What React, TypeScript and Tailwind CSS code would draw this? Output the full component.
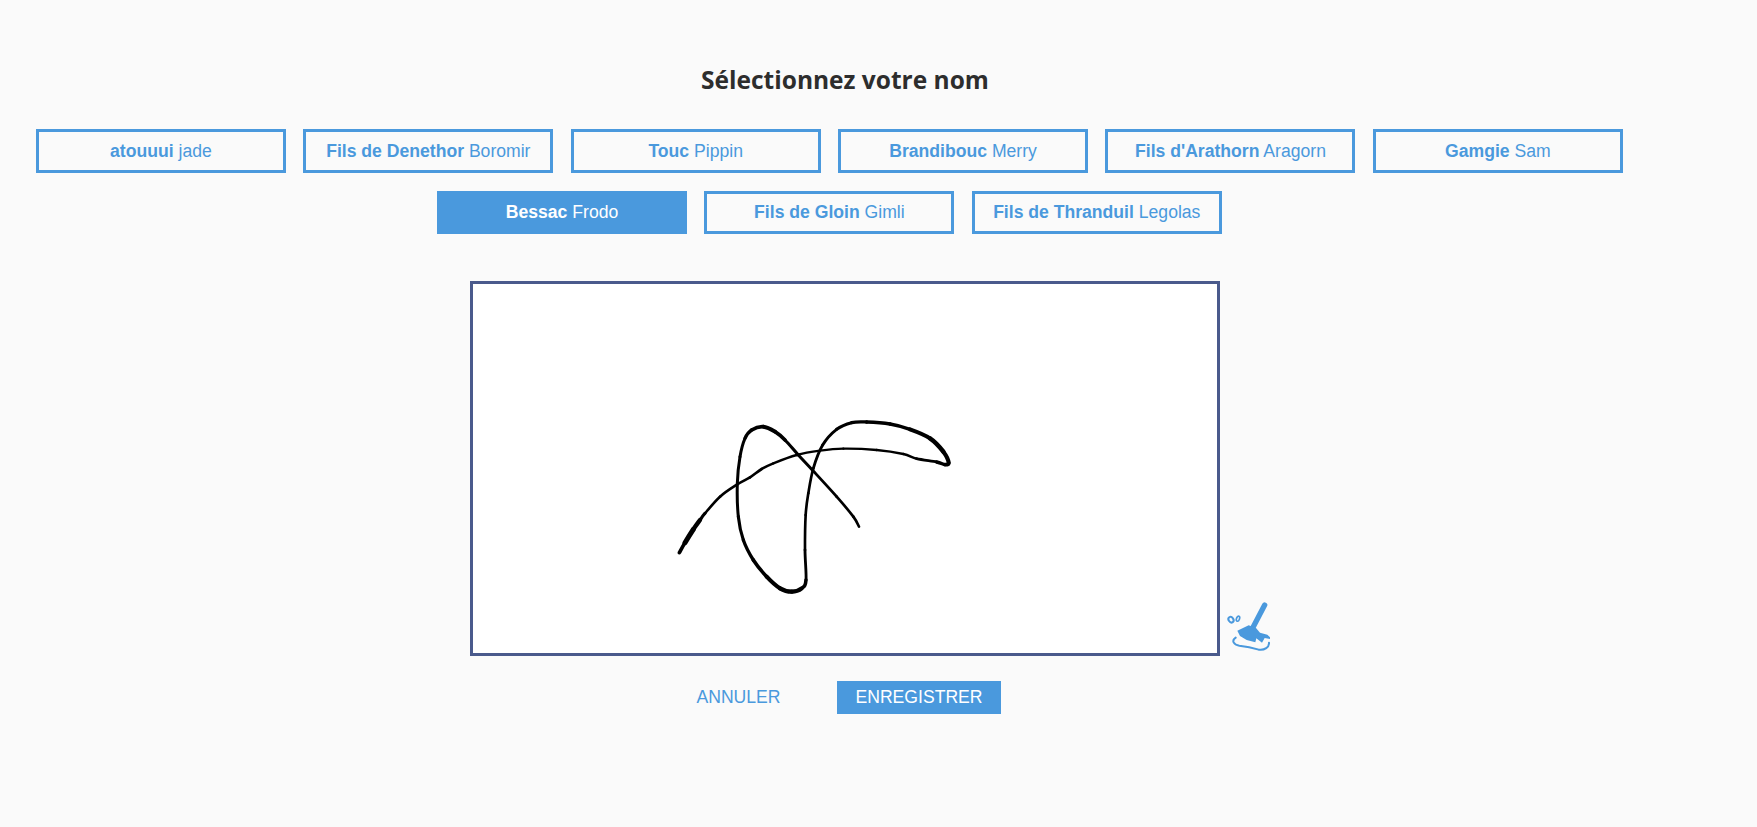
import React from "react";

const names = [
  ["atouuui", "jade"],
  ["Fils de Denethor", "Boromir"],
  ["Touc", "Pippin"],
  ["Brandibouc", "Merry"],
  ["Fils d'Arathorn", "Aragorn"],
  ["Gamgie", "Sam"],
  ["Bessac", "Frodo"],
  ["Fils de Gloin", "Gimli"],
  ["Fils de Thranduil", "Legolas"],
];

// x, y, pen width (3 units = 1px)
type Pt = [number, number, number];

const pen: Pt[] = [
  [88, 458, 7], [105, 428, 15], [130, 388, 15], [150, 360, 11], [165, 340, 8], [210, 290, 8],
  [262, 253, 8], [300, 232, 8], [335, 207, 8], [370, 190, 7], [440, 165, 7], [510, 152, 7],
  [580, 146, 7], [680, 150, 7], [760, 162, 7], [800, 176, 8], [860, 186, 9], [885, 194, 11],
  [896, 188, 11], [880, 155, 14], [840, 115, 13], [780, 88, 11], [720, 72, 10], [650, 66, 10],
  [605, 68, 10], [560, 88, 9], [518, 135, 9], [490, 205, 8], [475, 280, 8], [467, 345, 8],
  [465, 450, 8], [468, 540, 9], [455, 565, 12], [425, 575, 13], [390, 565, 13], [350, 530, 12],
  [310, 480, 10], [280, 420, 10], [265, 350, 9], [262, 250, 9], [270, 170, 9], [285, 115, 9],
  [305, 90, 11], [340, 80, 12], [375, 95, 12], [405, 120, 10], [445, 165, 9], [487, 210, 9],
  [560, 290, 8], [610, 350, 8], [627, 380, 8],
];

// one bezier span per pair of points so the width can change along the stroke
function spans(pts: Pt[]) {
  const out: { d: string; w: number }[] = [];
  for (let i = 0; i < pts.length - 1; i++) {
    const p0 = pts[Math.max(i - 1, 0)];
    const p1 = pts[i];
    const p2 = pts[i + 1];
    const p3 = pts[Math.min(i + 2, pts.length - 1)];
    const c1x = p1[0] + (p2[0] - p0[0]) / 6;
    const c1y = p1[1] + (p2[1] - p0[1]) / 6;
    const c2x = p2[0] - (p3[0] - p1[0]) / 6;
    const c2y = p2[1] - (p3[1] - p1[1]) / 6;
    out.push({
      d: `M${p1[0]} ${p1[1]} C${c1x} ${c1y} ${c2x} ${c2y} ${p2[0]} ${p2[1]}`,
      w: (p1[2] + p2[2]) / 2,
    });
  }
  return out;
}

function Signature() {
  return (
    <svg className="block w-full h-full" viewBox="-531 -348 2232 1107">
      <g fill="none" stroke="#000000" strokeLinecap="round">
        {spans(pen).map((s, i) => (
          <path key={i} d={s.d} strokeWidth={s.w} />
        ))}
      </g>
    </svg>
  );
}

function BroomIcon() {
  return (
    <svg className="block w-[48px] h-[56px]" viewBox="0 0 144 168">
      <path d="M128 27 L94 92" stroke="#4a99dd" strokeWidth="16" strokeLinecap="round" fill="none" />
      <path
        d="M46 104 L80 88 L102 96 L114 110 L136 116 L150 130 L128 126 L120 140 L103 127 L100 139 L74 132 L54 120 Z"
        fill="#4a99dd"
      />
      <path
        d="M41 125 C28 134 34 146 52 149 C75 151 95 156 110 161 C128 164 142 153 141 140"
        fill="none"
        stroke="#4a99dd"
        strokeWidth="6"
        strokeLinecap="round"
      />
      <ellipse cx="27" cy="71" rx="7" ry="9" fill="none" stroke="#4a99dd" strokeWidth="6" transform="rotate(-35 27 71)" />
      <ellipse cx="48" cy="68" rx="4.5" ry="8" fill="none" stroke="#4a99dd" strokeWidth="5" transform="rotate(20 48 68)" />
    </svg>
  );
}

export default function App() {
  return (
    <div className="min-h-[827px] bg-[#fafafa] font-['Liberation_Sans',Arial,sans-serif]">
      <div className="w-[1690px] flex flex-col items-center">
        <h1 className="mt-[63px] h-[34px] text-[24.5px] leading-[34px] font-bold text-[#2d2d2d] font-['Open_Sans',sans-serif]">
          Sélectionnez votre nom
        </h1>
        <div className="self-start w-[1658.8px] mt-[32px] flex flex-wrap justify-center gap-x-[17.4px] gap-y-[18px]">
          {names.map(([last, first]) => {
            const active = first === "Frodo";
            return (
              <button
                key={first}
                className={
                  active
                    ? "w-[250px] h-[43.5px] bg-[#4a99dd] border-[3px] border-[#4a99dd] text-white text-[17.6px]"
                    : "w-[250px] h-[43.5px] border-[3px] border-[#4a99dd] text-[#4a99dd] text-[17.6px]"
                }
              >
                <strong className="font-bold">{last}</strong> {first}
              </button>
            );
          })}
        </div>
        <div className="relative mt-[47px] w-[750px] h-[375px] bg-white border-[3px] border-[#4a5a8c]">
          <Signature />
          <div className="absolute left-[749px] bottom-[1px]">
            <BroomIcon />
          </div>
        </div>
        <div className="mt-[25px] flex items-center gap-[49px]">
          <button className="w-[99px] h-[33px] text-[17.6px] text-[#4a99dd]">ANNULER</button>
          <button className="w-[164px] h-[33px] bg-[#4a99dd] text-[17.6px] text-white">ENREGISTRER</button>
        </div>
      </div>
    </div>
  );
}
